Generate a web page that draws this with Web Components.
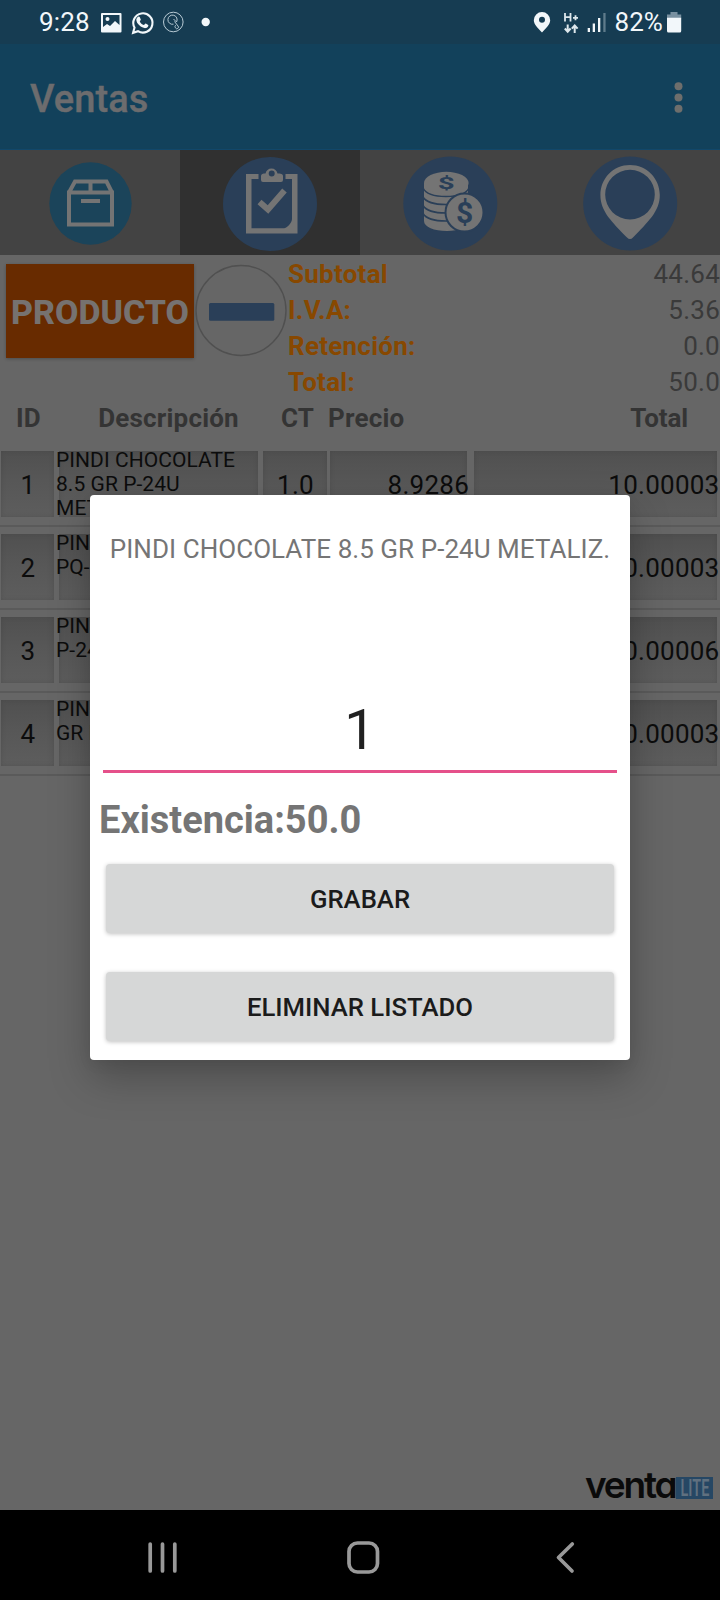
<!DOCTYPE html>
<html lang="es">
<head>
<meta charset="utf-8">
<title>Ventas</title>
<style>
html,body{margin:0;padding:0}
body{width:720px;height:1600px;overflow:hidden;background:#666;font-family:Roboto,"Liberation Sans",sans-serif;font-size:26px}
</style>
</head>
<body>
<ventas-app></ventas-app>
<script>
const define=(name,html)=>{
  customElements.define(name,class extends HTMLElement{
    constructor(){
      super();
      const t=document.createElement('template');
      t.innerHTML=html;
      this.attachShadow({mode:'open'}).append(t.content.cloneNode(true));
    }
  });
};

define('status-bar',`
<style>
:host{display:flex;align-items:center;height:44px;box-sizing:border-box;padding:0 38px 0 39px;background:#163c52;color:#f2f7fa}
svg{display:block;flex:none}
span{line-height:46px;letter-spacing:.15px}
.sp{flex:1}
</style>
<span>9:28</span>
<svg width="160" height="44" style="margin-left:7.500px" viewBox="97 0 160 44">
 <path fill="#f2f7fa" fill-rule="evenodd" d="M102 13h18.500a1 1 0 0 1 1 1v17.500a1 1 0 0 1-1 1H102a1 1 0 0 1-1-1V14a1 1 0 0 1 1-1ZM103 15v12l4-3 3 2 5-5 4.500 4V15ZM107.500 17a2 2 0 1 1 0 4 2 2 0 0 1 0-4Z"/>
 <path fill="none" stroke="#f2f7fa" stroke-width="2.100" d="M133.100 32.800 134.500 27.600A9.600 9.600 0 1 1 138 31.200Z"/>
 <path fill="#f2f7fa" d="M137.300 17.500c1-1.300 2-1.200 2.500-.3l1 2.200c.2.700-1 1.500-1 2 .8 1.700 2.200 3 4 3.700.7 0 1.200-1.600 2-1.500l2.400 1.300c.7.600-.6 2.900-2.500 3.200-3.500.5-9.500-4-9.400-8.500.1-.9.400-1.500 1-2.100Z"/>
 <g fill="none" stroke="#b8cad4" stroke-width="1"><circle cx="173.300" cy="22" r="9.800"/><path d="M173.500 24.200a4.600 4.600 0 1 1 3-2.200l-3-3"/><path d="m174.500 21.500 3.500 4.500a1.600 1.600 0 1 1-2.600 1.800c-.8-1.300-.5-2 .5-2.600"/></g>
 <circle cx="205.700" cy="22" r="4.200" fill="#f2f7fa"/>
</svg>
<div class="sp"></div>
<svg width="90" height="44" viewBox="524 0 90 44">
 <path fill="#f2f7fa" fill-rule="evenodd" d="M542 12a8.200 8.200 0 0 1 8.200 8.200c0 4.300-4.600 8.400-8.200 12.300-3.600-3.900-8.200-8-8.200-12.300A8.200 8.200 0 0 1 542 12Zm0 4.800a3 3 0 1 0 0 6 3 3 0 0 0 0-6Z"/>
 <g fill="none" stroke="#dde7ec" stroke-width="1.800"><path d="M565 13v8.500M570.500 13v8.500M565 17.200h5.500M573 17.800h5M575.500 15.300v5"/><path stroke-width="2" d="M567.700 24.500v7M564.800 28.500l2.900 3.200 2.900-3.200M574.700 33v-7M571.800 28.700l2.900-3.200 2.900 3.200"/></g>
 <path fill="#f2f7fa" d="M587.700 28h2.300v4h-2.300zM592.700 23.500h2.300V32h-2.300zM598 18h2.300v14H598z"/><path fill="#5f7b8b" d="M603.300 13h2.300v19h-2.300z"/>
</svg>
<span style="letter-spacing:.1px">82%</span>
<svg width="15" height="44" viewBox="667 0 15 44" style="margin-left:4px"><path fill="#7890a0" d="M670.500 12h7v2.500h3.700v4H667v-4h3.500z"/><path fill="#f2f7fa" d="M667 17.700h14.200V31a1.500 1.500 0 0 1-1.500 1.500h-11.200A1.500 1.500 0 0 1 667 31z"/></svg>
`);

define('app-bar',`
<style>
:host{display:flex;align-items:center;justify-content:space-between;height:106px;box-sizing:border-box;padding:0 37px 0 30px;background:#12415b;border-bottom:1px solid #11476a;color:#6c6c6e;font-size:38px}
span{font-weight:500;line-height:50px;margin-top:5px;letter-spacing:.1px;-webkit-text-stroke:.4px #6c6c6e}
svg{display:block}
</style>
<span><slot></slot></span>
<svg width="10" height="34" viewBox="0 0 10 34" fill="#6e6e6c"><circle cx="5.500" cy="6.300" r="4"/><circle cx="5.500" cy="17.500" r="4"/><circle cx="5.500" cy="28.700" r="4"/></svg>
`);

define('tab-item',`
<style>
:host{display:block;height:105px;background:#434343}
:host([active]){background:#303030}
</style><slot></slot>`);

define('tab-strip',`
<style>
:host{display:grid;grid-template-columns:repeat(4,1fr);height:105px}
svg{display:block}
.m{font-family:Roboto,"Liberation Sans",sans-serif;font-weight:700}
</style>
<tab-item><svg width="180" height="105" viewBox="0 150 180 105"><circle cx="90.500" cy="203.500" r="41.200" fill="#1b445a"/>
<g fill="none" stroke="#747474" stroke-width="4"><path d="M69 192.500V224.500H112V192.500ZM69 192.500 75 181.500H106.500L112 192.500M90.500 181v10"/><path d="M81 201h19"/></g></svg></tab-item>
<tab-item active><svg width="180" height="105" viewBox="180 150 180 105"><circle cx="270" cy="204" r="47" fill="#2a3f58"/>
<path fill="#747474" fill-rule="evenodd" d="M246 174h12.500v5H251.500v49.200h32.500c3-.5 8-5 8-9.500V179h-6.500v-5H297.500v59.500H246Z"/>
<path fill="#747474" fill-rule="evenodd" d="M261 176c0-2 2-2.500 4.500-2.500.5-3 3-5 6-5s5.500 2 6 5c3 0 5.500.5 5.500 2.500v4a2 2 0 0 1-2 2h-18a2 2 0 0 1-2-2Zm10.700-5.500a3 3 0 1 0 0 6 3 3 0 0 0 0-6Z"/>
<path fill="none" stroke="#747474" stroke-width="6" d="m259.500 202 8.500 7.500 16.500-19"/></svg></tab-item>
<tab-item><svg width="180" height="105" viewBox="360 150 180 105"><circle cx="450.300" cy="203.500" r="47" fill="#2a3f58"/>
<path fill="#747474" d="M424 183v38c0 6 10 10 23 10 12 0 21-4 21-10v-38Z"/>
<g fill="none" stroke="#2a3f58" stroke-width="1.600"><path d="M423 188c3 6 12 8.500 23 8.500s20-2.500 23-8.500M423 197c3 5 12 7.500 23 7.500s20-2.500 23-7.500M423 205.500c3 5 12 7.500 23 7.500s20-2.500 23-7.500M423 213.500c3 5 12 7.500 23 7.500s20-2.500 23-7.500" /></g>
<ellipse cx="446.300" cy="183" rx="22.300" ry="11.200" fill="#747474"/>
<text class="m" text-anchor="middle" transform="translate(446.300 188.800) scale(1.850 1)" font-size="16" fill="#2a3f58">$</text>
<circle cx="464.500" cy="212.500" r="19" fill="#747474" stroke="#2a3f58" stroke-width="2"/>
<text class="m" text-anchor="middle" x="464.500" y="223" font-size="30" fill="#2a3f58">$</text></svg></tab-item>
<tab-item><svg width="180" height="105" viewBox="540 150 180 105"><circle cx="630.200" cy="203.500" r="47" fill="#2a3f58"/>
<path fill="#747474" fill-rule="evenodd" d="M630 165c16.500 0 29.800 13.300 29.800 30 0 16.500-12 27-26.800 42.500q-3 3-6 0c-15-15.500-26.600-26-26.600-42.500 0-16.700 13-30 29.600-30Zm0 4.800a24.800 24.800 0 1 0 0 49.600 24.800 24.800 0 0 0 0-49.600Z"/></svg></tab-item>
`);

define('total-line',`
<style>:host{display:flex;justify-content:space-between;height:36px;line-height:36px;color:#3a3a3a;letter-spacing:.25px}
b{font-weight:700;color:#884800}</style>
<b><slot name="label"></slot></b><span><slot></slot></span>`);

define('summary-panel',`
<style>
:host{display:flex;height:145px;box-sizing:border-box;padding-left:6px}
.p{width:188px;height:94px;margin-top:9px;background:#682b00;color:#767270;font-weight:800;font-size:34px;line-height:96px;text-align:center;box-shadow:0 1px 3px rgba(0,0,0,.25);white-space:nowrap}
svg{display:block;margin-left:1px;width:93px}
.t{flex:1;padding-top:1px}
</style>
<div class="p">PRODUCTO</div>
<svg width="93" height="145" viewBox="195 255 93 145"><circle cx="241" cy="310.500" r="45" fill="none" stroke="#505050" stroke-width="1.400"/><rect x="209" y="303" width="65.300" height="17.800" rx="1.500" fill="#2a3f58"/></svg>
<div class="t">
<total-line><span slot="label">Subtotal</span>44.64</total-line>
<total-line><span slot="label">I.V.A:</span>5.36</total-line>
<total-line><span slot="label">Retención:</span>0.0</total-line>
<total-line><span slot="label">Total:</span>50.0</total-line>
</div>`);

define('table-head',`
<style>
:host{display:grid;grid-template-columns:57px 223px 35px 100px 1fr;height:50px;line-height:36px;font-weight:700;color:#343434;letter-spacing:.2px}
.c{text-align:center}
.q{padding-left:1px}
.p{padding-left:13px}
.t{text-align:right;padding-right:32px;letter-spacing:-.1px}
</style>
<span class="c">ID</span><span class="c">Descripción</span><span class="q">CT</span><span class="p">Precio</span><span class="t">Total</span>`);

define('sale-row',`
<style>
:host{display:grid;grid-template-columns:53px 199px 64px 137px 243px;column-gap:5px;padding:1px 0 0 1px;height:77px;margin-bottom:6px;box-sizing:border-box;border-bottom:2px solid #5a5a5a;color:#0c0c0c}
div{height:66px;background:linear-gradient(#505050,#575757 45%,#5d5d5d);box-shadow:inset 0 0 4px rgba(60,60,60,.35);line-height:68px;white-space:nowrap;letter-spacing:.25px}
.d{line-height:24px;font-size:21px;letter-spacing:.05px}
.d p{margin:-3px 0 0 -3px;white-space:pre-line}
.c{text-align:center;text-indent:1px}
.n{text-align:right}
.n span{margin-right:-2.500px}
.price{margin:0 2px 0 -2px}
.price span{margin-right:-2px}
</style>
<div class="c"><slot name="id"></slot></div><div class="d"><p><slot name="desc"></slot></p></div><div class="c"><slot name="ct"></slot></div><div class="n price"><span><slot name="price"></slot></span></div><div class="n"><span><slot name="total"></slot></span></div>`);

define('venta-logo',`
<style>
:host{display:flex;align-items:center;justify-content:flex-end;gap:3px;height:22px}
.v{font:600 37px/22px Inter,Lato,sans-serif;font-feature-settings:"cv11";color:#0a0a0a;letter-spacing:-2.200px;width:88px;margin-top:-5px}
.l{width:37px;height:22px;margin-top:1px;background:#264764;color:#60707f;display:flex;justify-content:center}
.l span{font:600 24px/23px Roboto,"Liberation Sans",sans-serif;transform:scaleX(.6)}
</style>
<span class="v">venta</span><span class="l"><span>LITE</span></span>`);

define('nav-bar',`
<style>:host{display:block;height:90px;background:#000}svg{display:block}</style>
<svg width="720" height="90" viewBox="0 1510 720 90" fill="none" stroke="#999" stroke-width="3.700" stroke-linecap="round" stroke-linejoin="round"><path d="M150.200 1544v27M162.500 1544v27M174.800 1544v27"/><rect x="349" y="1543" width="28.500" height="29" rx="8.500"/><path d="m572.300 1544-13.800 13.500 13.500 13.500"/></svg>`);

define('raised-button',`
<style>:host{display:block}
button{display:block;width:100%;height:69px;border:0;padding:0;border-radius:4px;background:#d6d7d7;color:#1b1b1b;font:500 25.700px/70px Roboto,"Liberation Sans",sans-serif;box-shadow:0 1px 4px rgba(0,0,0,.25)}
</style><button><slot></slot></button>`);

define('quantity-dialog',`
<style>
:host{position:absolute;left:90px;top:495px;width:540px;height:565px;box-sizing:border-box;border-radius:4px;background:#fff;box-shadow:0 18px 40px rgba(0,0,0,.25),0 4px 14px rgba(0,0,0,.06);display:flex;flex-direction:column;padding:0 16px 0}
.t{margin:36px -10px 0;text-align:center;color:#757575;line-height:36px;white-space:nowrap;letter-spacing:.05px}
.q{margin:123px -3px 0;height:83px;box-sizing:border-box;border-bottom:3px solid #e5508a;text-align:center;font-size:56px;line-height:80px;color:#212121}
.e{margin:24px -7px 0;height:46px;line-height:46px;font-size:38px;font-weight:700;color:#757575}
.a{display:grid;gap:39px;margin-top:21px}
</style>
<div class="t">PINDI CHOCOLATE 8.5 GR P-24U METALIZ.</div>
<div class="q">1</div>
<div class="e">Existencia:50.0</div>
<div class="a"><raised-button>GRABAR</raised-button><raised-button>ELIMINAR LISTADO</raised-button></div>`);

define('ventas-app',`
<style>
:host{display:flex;flex-direction:column;position:relative;width:720px;height:1600px;overflow:hidden;background:#666}
main{flex:1;display:flex;flex-direction:column}
venta-logo{margin:auto 7px 12px 0}
</style>
<status-bar></status-bar>
<app-bar>Ventas</app-bar>
<tab-strip></tab-strip>
<main>
<summary-panel></summary-panel>
<table-head></table-head>
<sale-row><span slot="id">1</span><span slot="desc">PINDI CHOCOLATE
8.5 GR P-24U
METALIZ.</span><span slot="ct">1.0</span><span slot="price">8.9286</span><span slot="total">10.00003</span></sale-row>
<sale-row><span slot="id">2</span><span slot="desc">PIN
PQ-</span><span slot="total">10.00003</span></sale-row>
<sale-row><span slot="id">3</span><span slot="desc">PIN
P-24</span><span slot="total">20.00006</span></sale-row>
<sale-row><span slot="id">4</span><span slot="desc">PIN
GR P</span><span slot="total">10.00003</span></sale-row>
<venta-logo></venta-logo>
</main>
<nav-bar></nav-bar>
<quantity-dialog></quantity-dialog>
`);
</script>
</body>
</html>
